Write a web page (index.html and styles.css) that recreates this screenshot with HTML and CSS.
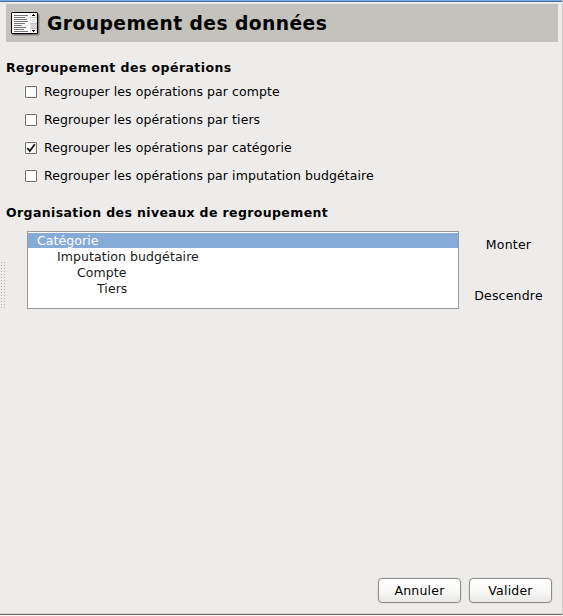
FILE: index.html
```html
<!DOCTYPE html>
<html lang="fr">
<head>
<meta charset="utf-8">
<title>Groupement des données</title>
<link rel="stylesheet" href="styles.css">
</head>
<body>
<main class="window">
  <span class="grip"></span>
  <header class="banner">
    <svg class="banner-icon" width="30" height="26" viewBox="0 0 30 26">
      <rect x="1" y="2" width="28" height="22" rx="2" fill="#000" opacity=".15"/>
      <rect x="1" y="1" width="27" height="22" rx="2" fill="#000" opacity=".25"/>
      <rect x="0" y="0" width="27" height="22" rx="1.5" fill="#000"/>
      <rect x="1" y="1" width="25" height="20" fill="#fff"/>
      <path d="M3 3.5h14M3 5.5h11M3 7.5h13M3 9.5h14M3 11.5h11M3 13.5h8M3 15.5h12M3 17.5h10M3 19.5h14" stroke="#777"/>
      <rect x="19" y="1" width="7" height="20" fill="#e4e4e4"/>
      <rect x="20" y="1" width="5" height="4" fill="#fff"/>
      <rect x="20" y="6" width="5" height="5" fill="#f6f6f6"/>
      <rect x="20" y="17" width="5" height="4" fill="#fff"/>
      <path d="M20 5.5h6M20 11.5h6M20 16.5h6" stroke="#bbb"/>
      <rect x="20" y="12" width="6" height="4" fill="#d4d4d4"/>
      <path d="M22 2.5h1M21 3.5h3M21 18.5h3M22 19.5h1" stroke="#000"/>
      <path d="M21 7.5h1M23 7.5h1M22 8.5h1M21 9.5h1M23 9.5h1" stroke="#ccc"/>
    </svg>
    <h1>Groupement des données</h1>
  </header>
  <h2>Regroupement des opérations</h2>
  <div class="options">
    <label class="option"><span class="box"></span>Regrouper les opérations par compte</label>
    <label class="option"><span class="box"></span>Regrouper les opérations par tiers</label>
    <label class="option"><span class="box"><svg width="10" height="10" viewBox="0 0 10 10"><path d="M1.3 5.2L3.8 8L8.8 1.2" fill="none" stroke="#1a1a1a" stroke-width="1.9"/></svg></span>Regrouper les opérations par catégorie</label>
    <label class="option"><span class="box"></span>Regrouper les opérations par imputation budgétaire</label>
  </div>
  <h2 class="levels-title">Organisation des niveaux de regroupement</h2>
  <section class="levels">
    <ul class="tree">
      <li class="selected">Catégorie</li>
      <li class="depth-1">Imputation budgétaire</li>
      <li class="depth-2">Compte</li>
      <li class="depth-3">Tiers</li>
    </ul>
    <div class="order">
      <button class="flat">Monter</button>
      <button class="flat">Descendre</button>
    </div>
  </section>
  <footer class="actions">
    <button class="button">Annuler</button>
    <button class="button">Valider</button>
  </footer>
</main>
</body>
</html>
```

FILE: styles.css
```css
* { box-sizing: border-box; }
body {
  margin: 0;
  height: 616px;
  background: #f8f7f6;
  overflow: hidden;
  font: 12.5px/16px "DejaVu Sans", sans-serif;
  letter-spacing: .08px;
  color: #000;
}
.window {
  position: relative;
  display: flex;
  flex-direction: column;
  height: 615px;
  padding: 2px 4px 11px 6px;
  background: linear-gradient(#7ba4d5 1px, #4272ad 1px, #4272ad 2px, transparent 2px), linear-gradient(#edeceb, #edeceb);
  background-repeat: no-repeat;
  border-right: 1px solid #cac9c7;
  border-bottom: 1px solid #6d6a67;
  box-shadow: inset 0 -1px #d5d3d0;
}
.banner {
  display: flex;
  align-items: center;
  height: 38px;
  margin-top: 2px;
  padding-left: 5px;
  background: #c4c2bc;
}
.banner-icon { margin-top: 4px; }
h1 { margin: 2px 0 0 6px; font-size: 18.7px; line-height: 24px; letter-spacing: .44px; white-space: nowrap; }
h2 { margin: 18px 0 0; font-size: 12.5px; line-height: 16px; letter-spacing: .44px; }
.options { display: flex; flex-direction: column; gap: 12px; margin-top: 8px; padding-left: 19px; }
.option { display: flex; align-items: center; height: 16px; }
.box {
  width: 12px;
  height: 12px;
  margin-right: 7px;
  background: #fff;
  border: 1px solid #706d6a;
  border-radius: 1px;
  box-shadow: 0 0 0 1px #f5f4f3;
}
.box svg { display: block; }
.levels-title { margin-top: 21px; letter-spacing: .38px; }
.levels { display: flex; margin: 10px 0 0 21px; }
.tree {
  width: 432px;
  height: 78px;
  margin: 0;
  padding: 1px 0;
  list-style: none;
  background: #fff;
  border: 1px solid #9c9a98;
  color: #1a1a1a;
}
.tree li { height: 16px; padding-left: 9px; line-height: 16px; }
.tree .selected { height: 15px; margin-bottom: 1px; background: #86abd9; color: #fff; }
.tree .depth-1 { padding-left: 29px; }
.tree .depth-2 { padding-left: 49px; }
.tree .depth-3 { padding-left: 69px; }
.order { display: flex; flex-direction: column; flex: 1; gap: 35px; padding: 6px 0 0; }
button { font: inherit; letter-spacing: .2px; color: inherit; padding: 0; }
.flat { height: 16px; border: 0; background: none; }
.actions { display: flex; justify-content: flex-end; gap: 8px; margin-top: auto; padding-right: 6px; }
.button {
  width: 83px;
  height: 25px;
  border: 1px solid #8f8c89;
  border-radius: 4px;
  background: linear-gradient(#fff, #f8f8f7 55%, #e8e7e5);
  box-shadow: 0 0 0 1px #e4e2e0;
}
.grip {
  position: absolute;
  left: 0;
  top: 262px;
  width: 5px;
  height: 47px;
  background: radial-gradient(circle at 1.5px .5px, #b5b3b0 .7px, transparent .8px) 0 0 / 3px 3px;
}
```
